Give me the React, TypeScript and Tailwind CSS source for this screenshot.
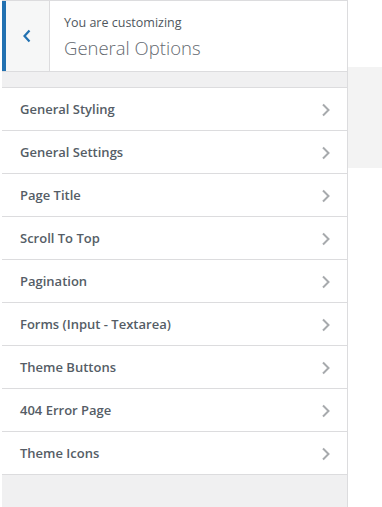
import React from "react";

const sections: string[] = [
  "General Styling",
  "General Settings",
  "Page Title",
  "Scroll To Top",
  "Pagination",
  "Forms (Input - Textarea)",
  "Theme Buttons",
  "404 Error Page",
  "Theme Icons",
];

function Chevron({ className }: { className?: string }) {
  return (
    <svg width="10" height="14" viewBox="0 0 10 14" className={className}>
      <path d="M2 1.5 L7.5 7 L2 12.5" fill="none" stroke="currentColor" strokeWidth="2" />
    </svg>
  );
}

export default function App() {
  return (
    <div className="relative flex h-[507px] w-[382px] bg-white font-['Open_Sans',sans-serif] overflow-hidden">
      <div className="ml-[2px] flex h-full w-[346px] flex-col border-r border-[#dcdcde] bg-[#f0f0f1]">
        {/* header */}
        <div className="flex h-[72px] border-t border-b border-[#dcdcde] bg-white">
          <div className="flex w-[48px] items-center justify-center border-l-4 border-r border-l-[#2271b1] border-r-[#dcdcde] bg-[#f6f7f7] pr-[2px] text-[#2271b1]">
            <svg width="10" height="14" viewBox="0 0 10 14">
              <path d="M7.5 1.5 L2.5 7 L7.5 12.5" fill="none" stroke="currentColor" strokeWidth="2.2" />
            </svg>
          </div>
          <div className="flex flex-col pl-[14px] pt-[13px]">
            <span className="text-[12.5px] leading-[18px] text-[#50575e]">You are customizing</span>
            <span className="mt-[4px] text-[18.5px] font-light leading-[24px] text-[#646970]">General Options</span>
          </div>
        </div>
        <div className="h-[16px] border-b border-[#dcdcde]" />
        <ul>
          {sections.map((title, idx) => (
            <li
              key={idx}
              className="flex h-[43px] items-center justify-between border-b border-[#dcdcde] bg-white pl-[18px] pr-[16px] pt-[1px]"
            >
              <span className="text-[13px] font-semibold text-[#555d66]">{title}</span>
              <Chevron className="text-[#a7aaad]" />
            </li>
          ))}
        </ul>
      </div>
      <div className="absolute left-[348px] top-[67px] h-[101px] w-[34px] bg-[#f3f3f3]" />
    </div>
  );
}
